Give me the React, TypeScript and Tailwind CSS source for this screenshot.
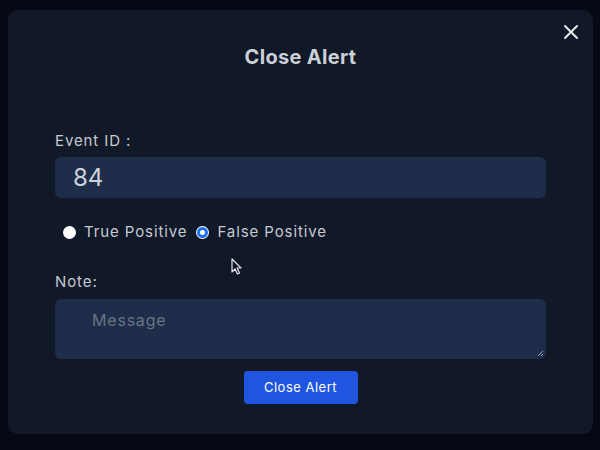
import React from "react";

export default function App() {
  return (
    <div
      className="w-[600px] h-[450px] bg-[#060814] pt-[10px] px-[8px] overflow-hidden relative"
      style={{ fontFamily: "Inter, 'Noto Sans', sans-serif" }}
    >
      <div className="relative w-[585px] h-[424px] bg-[#111827] rounded-[10px] px-[47px] pt-[33px]">
        <button className="absolute right-[14px] top-[14px] text-[#e5e7eb]">
          <svg width="16" height="16" viewBox="0 0 16 16" fill="none" stroke="currentColor" strokeWidth="2" strokeLinecap="round">
            <path d="M2 2 L14 14 M14 2 L2 14" />
          </svg>
        </button>
        <h2 className="text-center text-[20px] font-bold text-[#cbd0d8] leading-[28px] tracking-[0.3px]">Close Alert</h2>
        <div className="mt-[60px] text-[15px] leading-[20px] text-[#c5cad3] tracking-[0.9px]">Event ID :</div>
        <div className="mt-[6px] h-[41px] rounded-[6px] bg-[#1e2d4a] flex items-center pl-[18px] text-[24px] text-[#cdd2da]">84</div>
        <div className="mt-[24px] flex items-center pl-[8px] text-[15px] text-[#c5cad3] tracking-[0.9px] leading-[20px]">
          <span className="w-[13px] h-[13px] rounded-full bg-white inline-block" />
          <span className="ml-[8px]">True Positive</span>
          <span className="ml-[9px] w-[13px] h-[13px] rounded-full bg-white inline-flex items-center justify-center">
            <span className="w-[11px] h-[11px] rounded-full border-[3px] border-[#1f6feb] bg-white" />
          </span>
          <span className="ml-[8px]">False Positive</span>
        </div>
        <div className="mt-[30px] text-[15px] leading-[20px] text-[#c5cad3] tracking-[0.9px]">Note:</div>
        <div className="mt-[7px] h-[60px] rounded-[6px] bg-[#1e2d4a] relative pl-[37px] pt-[9px] text-[16px] text-[#6b7384] tracking-[0.8px]">
          Message
          <svg className="absolute right-[2px] bottom-[2px]" width="7" height="7" viewBox="0 0 7 7" stroke="#9ca3af" strokeWidth="1">
            <path d="M1 6 L6 1 M4 6 L6 4" />
          </svg>
        </div>
        <div className="mt-[12px] flex justify-center">
          <button className="w-[114px] h-[33px] rounded-[4px] bg-[#1f55e0] text-white text-[13px] tracking-[0.5px]">Close Alert</button>
        </div>
      </div>
      <svg className="absolute left-[231px] top-[258px]" width="12" height="18" viewBox="0 0 12 18">
        <path d="M1 1 L1 14 L4 11 L6.5 16 L8.5 15 L6 10 L10 10 Z" fill="#111827" stroke="#e5e7eb" strokeWidth="1.2" strokeLinejoin="round" />
      </svg>
    </div>
  );
}
